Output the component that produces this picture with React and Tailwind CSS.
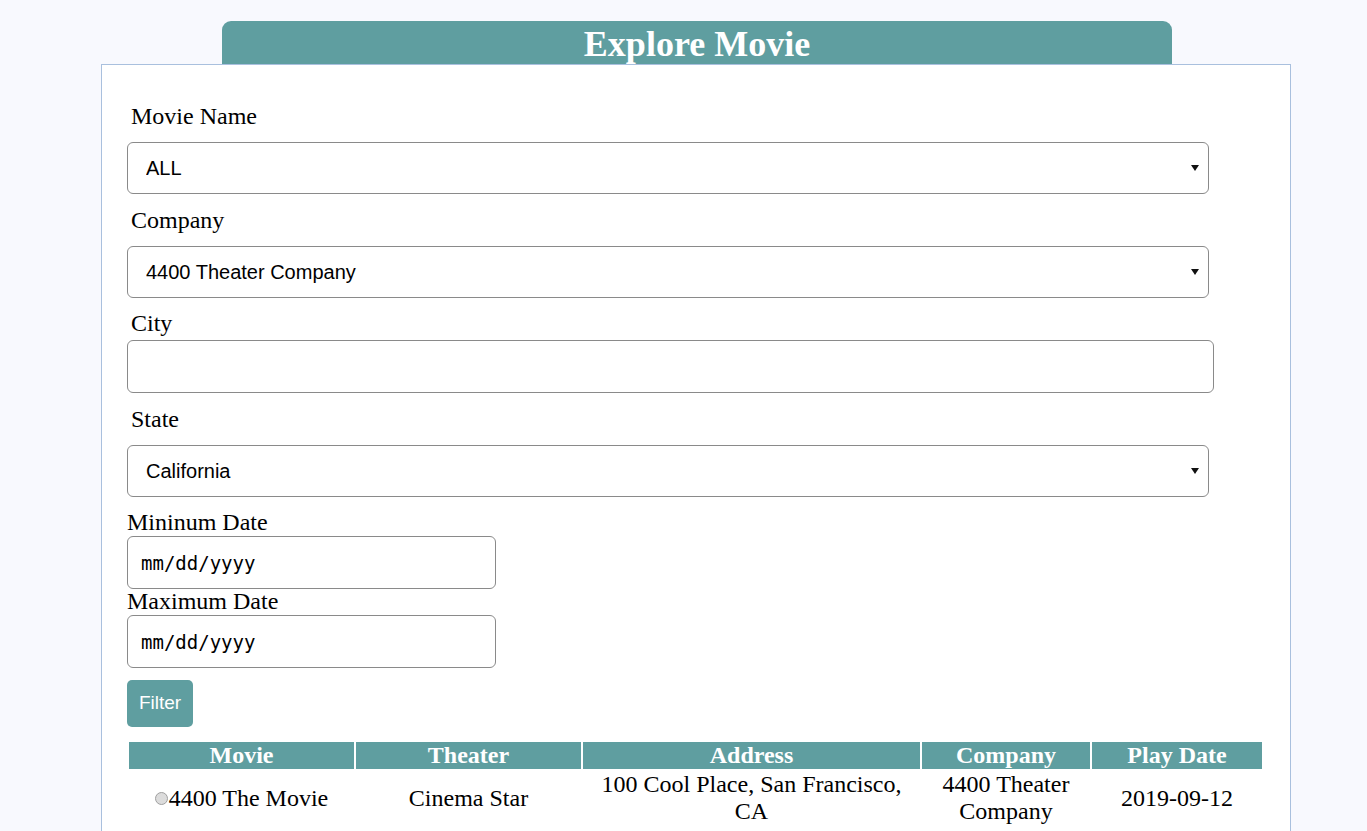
import React, { useState } from 'react';

const serif = { fontFamily: '"Liberation Serif", "Times New Roman", serif' };

const rows = [
  { id: 1, movie: '4400 The Movie', theater: 'Cinema Star', address: '100 Cool Place, San Francisco, CA', company: '4400 Theater Company', date: '2019-09-12' },
];

const Caret = () => (
  <svg className="absolute right-[10px] top-1/2 -translate-y-1/2 pointer-events-none" width="8" height="6" viewBox="0 0 8 6">
    <path d="M0 0 H8 L4 6 Z" fill="#111" />
  </svg>
);

const SelectBox = ({ value, options }) => (
  <div className="relative w-[1082px]">
    <select
      defaultValue={value}
      className="appearance-none w-full h-[52px] border border-[#8a8a8a] rounded-[6px] bg-white pl-[18px] text-[20px] text-black font-['Liberation_Sans',Arial,sans-serif] outline-none"
    >
      {options.map(o => <option key={o}>{o}</option>)}
    </select>
    <Caret />
  </div>
);

const DateBox = () => (
  <input
    type="text"
    placeholder="mm/dd/yyyy"
    className="w-[369px] h-[53px] border border-[#8a8a8a] rounded-[6px] bg-white pl-[13px] text-[19px] placeholder:text-black text-black font-['DejaVu_Sans_Mono',monospace] outline-none"
  />
);

const App = () => {
  const [selected, setSelected] = useState(null);

  return (
    <div className="min-h-[831px] bg-[#f8f9fe] pt-[21px]" style={serif}>
      <div className="ml-[222px] w-[950px] h-[43px] bg-[#5f9ea0] rounded-t-[9px] flex items-center justify-center">
        <h1 className="text-white font-bold text-[36px] leading-none mt-[3px]">Explore Movie</h1>
      </div>
      <div className="ml-[101px] w-[1190px] bg-white border border-[#a9c0de] pl-[25px] pt-[39px] pb-10">
        <label className="block pl-[4px] text-[24px] leading-6 mb-[14px]">Movie Name</label>
        <SelectBox value="ALL" options={['ALL', '4400 The Movie']} />

        <label className="block pl-[4px] text-[24px] leading-6 mt-[14px] mb-[14px]">Company</label>
        <SelectBox value="4400 Theater Company" options={['4400 Theater Company']} />

        <label className="block pl-[4px] text-[24px] leading-6 mt-[13px] mb-[5px]">City</label>
        <input type="text" className="block w-[1087px] h-[53px] border border-[#8a8a8a] rounded-[6px] bg-white outline-none" />

        <label className="block pl-[4px] text-[24px] leading-6 mt-[14px] mb-[14px]">State</label>
        <SelectBox value="California" options={['California']} />

        <label className="block text-[24px] leading-6 mt-[13px] mb-[2px]">Mininum Date</label>
        <DateBox />
        <label className="block text-[24px] leading-6 mt-0 mb-[2px]">Maximum Date</label>
        <DateBox />

        <button className="block mt-[12px] w-[66px] h-[47px] bg-[#5f9ea0] text-white rounded-[5px] text-[19px] font-['Liberation_Sans',Arial,sans-serif]">
          Filter
        </button>

        <table className="mt-[13px] border-separate border-spacing-[2px] w-[1137px] text-[24px]">
          <thead>
            <tr className="bg-[#5f9ea0] text-white font-bold leading-[27px] h-[27px]">
              <th className="w-[225px] p-0">Movie</th>
              <th className="w-[225px] p-0">Theater</th>
              <th className="w-[337px] p-0">Address</th>
              <th className="w-[168px] p-0">Company</th>
              <th className="w-[170px] p-0">Play Date</th>
            </tr>
          </thead>
          <tbody>
            {rows.map(r => (
              <tr key={r.id} className="text-center leading-[27px]">
                <td className="p-0 pb-[2px]">
                  <span className="inline-flex items-center">
                    <input
                      type="radio"
                      name="movie"
                      checked={selected === r.id}
                      onChange={() => setSelected(r.id)}
                      className="appearance-none w-[13px] h-[13px] rounded-full border border-[#a0a0a0] bg-[#dcdcdc] mr-px"
                    />
                    {r.movie}
                  </span>
                </td>
                <td className="p-0 pb-[2px]">{r.theater}</td>
                <td className="p-0 pb-[2px] px-4">{r.address}</td>
                <td className="p-0 pb-[2px] px-4">{r.company}</td>
                <td className="p-0 pb-[2px]">{r.date}</td>
              </tr>
            ))}
          </tbody>
        </table>
      </div>
    </div>
  );
};

export default App;
